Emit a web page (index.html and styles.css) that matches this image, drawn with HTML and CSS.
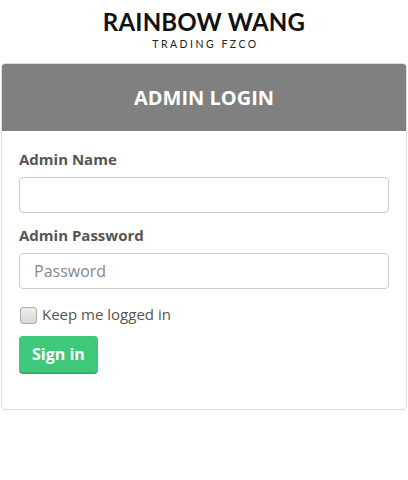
FILE: index.html
```html
<!DOCTYPE html>
<html>
<head>
<meta charset="utf-8">
<link rel="stylesheet" href="styles.css">
</head>
<body>
<div class="logo">
  <div class="logo-main">RAINBOW WANG</div>
  <div class="logo-sub">TRADING FZCO</div>
</div>
<div class="card">
  <div class="card-header">ADMIN LOGIN</div>
  <div class="card-body">
    <label class="label">Admin Name</label>
    <input class="input" type="text">
    <label class="label">Admin Password</label>
    <input class="input" type="password" placeholder="Password">
    <label class="check"><span class="box"></span>Keep me logged in</label>
    <button class="btn">Sign in</button>
  </div>
</div>
</body>
</html>
```
FILE: styles.css
```css
html, body { margin: 0; padding: 0; background: #fff; }
body { font-family: "Open Sans", "Liberation Sans", sans-serif; color: #555; }
.logo { display: flex; flex-direction: column; align-items: center; padding-top: 9px; height: 54px; box-sizing: content-box; }
.logo-main { font-family: Lato, "Open Sans", sans-serif; font-weight: 700; font-size: 24px; line-height: 26px; color: #111; letter-spacing: 0.2px; }
.logo-sub { font-family: Lato, "Open Sans", sans-serif; font-size: 10.5px; line-height: 13px; letter-spacing: 2.5px; color: #222; margin-top: 3px; padding-left: 3px; }
.card { margin: 0 1px; border: 1px solid #ddd; border-radius: 4px; overflow: hidden; }
.card-header { background: #808080; color: #fff; font-weight: 700; font-size: 20px; height: 67px; display: flex; align-items: center; justify-content: center; }
.card-body { padding: 18px 17px 35px 17px; display: flex; flex-direction: column; align-items: flex-start; }
.label { font-weight: 700; font-size: 15px; line-height: 20px; color: #555; }
.input { box-sizing: border-box; width: 100%; height: 36px; border: 1px solid #ccc; border-radius: 4px; margin: 8px 0 12px; padding: 0 14px; font-family: inherit; font-size: 16px; color: #555; }
.input::placeholder { color: #888; }
.check { display: flex; align-items: center; font-size: 15px; line-height: 20px; color: #555; margin-top: 3px; }
.box { width: 15px; height: 15px; border: 1px solid #aaa; border-radius: 3px; background: linear-gradient(#eee, #d8d8d8); margin-right: 5px; margin-left: 1px; margin-top: 3px; }
.btn { margin-top: 12px; background: #3ec97a; color: #fff; border: none; border-bottom: 2px solid #33b068; border-radius: 4px; height: 38px; padding: 0 13px; font-family: inherit; font-weight: 700; font-size: 16px; }
```
